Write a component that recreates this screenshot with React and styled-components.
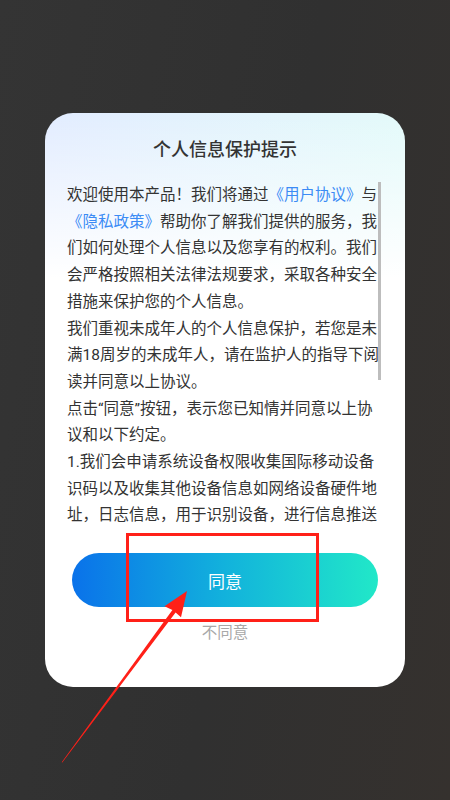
import styled, { createGlobalStyle } from "styled-components";

const GlobalStyle = createGlobalStyle`
	html, body {
		margin: 0;
		padding: 0;
	}
	body {
		font-family: Roboto, "Noto Sans CJK SC", sans-serif;
	}
`;

const Screen = styled.div`
	position: relative;
	width: 450px;
	height: 800px;
	display: flex;
	align-items: center;
	justify-content: center;
	background: linear-gradient(100deg, #343434 0%, #303030 55%, #35312e 100%);
	overflow: hidden;
`;

const Dialog = styled.div`
	width: 360px;
	height: 574px;
	box-sizing: border-box;
	border-radius: 28px;
	padding: 24px 0 0 22px;
	display: flex;
	flex-direction: column;
	background:
		linear-gradient(180deg, rgba(255, 255, 255, 0) 0px, #fff 165px),
		linear-gradient(90deg, #e2ecff 0%, #e3fafa 100%);
`;

const Title = styled.h2`
	margin: 0 22px 19px 0;
	font-size: 18px;
	font-weight: 500;
	line-height: 26px;
	text-align: center;
	color: #333;
`;

const ScrollArea = styled.div`
	position: relative;
	width: 314px;
	height: 348px;
`;

const Scroller = styled.div`
	width: 313px;
	height: 100%;
	overflow-y: auto;
	scrollbar-width: none;

	&::-webkit-scrollbar {
		display: none;
	}
`;

const ScrollThumb = styled.div`
	position: absolute;
	right: 0;
	top: 0;
	width: 3px;
	height: 198px;
	background: #bdbdbd;
`;

const Para = styled.p`
	margin: 0;
	font-size: 15.5px;
	line-height: 26.7px;
	color: #333;
`;

const Link = styled.span`
	color: #3b8bf5;
`;

const AgreeButton = styled.button`
	align-self: flex-start;
	margin: 23px 0 0 5px;
	width: 306px;
	height: 54px;
	border: none;
	border-radius: 27px;
	background: linear-gradient(90deg, #0a72ea 0%, #12b2dc 50%, #21e8c8 100%);
	color: #fff;
	font-family: Roboto, "Noto Sans CJK SC", sans-serif;
	font-size: 17px;
	cursor: pointer;
`;

const Refuse = styled.div`
	margin: 15px 22px 0 0;
	font-size: 15.5px;
	line-height: 22px;
	text-align: center;
	color: #a8a8a8;
`;

const Highlight = styled.div`
	position: absolute;
	left: 126px;
	top: 533px;
	width: 193px;
	height: 89px;
	box-sizing: border-box;
	border: 3px solid #ff2018;
	pointer-events: none;
`;

const ArrowLayer = styled.svg`
	position: absolute;
	left: 0;
	top: 0;
	pointer-events: none;
`;

export default function App() {
	return (
		<>
			<GlobalStyle />
			<Screen>
				<Dialog>
					<Title>个人信息保护提示</Title>
					<ScrollArea>
						<Scroller>
							<Para>
								欢迎使用本产品！我们将通过<Link>《用户协议》</Link>与
								<Link>《隐私政策》</Link>
								帮助你了解我们提供的服务，我们如何处理个人信息以及您享有的权利。我们会严格按照相关法律法规要求，采取各种安全措施来保护您的个人信息。
							</Para>
							<Para>
								我们重视未成年人的个人信息保护，若您是未满18周岁的未成年人，请在监护人的指导下阅读并同意以上协议。
							</Para>
							<Para>点击“同意”按钮，表示您已知情并同意以上协议和以下约定。</Para>
							<Para>
								1.我们会申请系统设备权限收集国际移动设备识码以及收集其他设备信息如网络设备硬件地址，日志信息，用于识别设备，进行信息推送和安全风控，保障您的账号安全。
							</Para>
							<Para>
								2.我们可能会申请位置权限，用于为您推荐附近的内容和服务，您可以拒绝授权，拒绝后不影响其他功能的使用。
							</Para>
							<Para>
								3.我们会采取业界领先的安全措施保护您的个人信息，未经您的同意，我们不会向第三方提供您的信息。
							</Para>
						</Scroller>
						<ScrollThumb />
					</ScrollArea>
					<AgreeButton>同意</AgreeButton>
					<Refuse>不同意</Refuse>
				</Dialog>
				<Highlight />
				<ArrowLayer width="450" height="800" viewBox="0 0 450 800">
					<polygon
						points="61.7,762.3 172.4,610.1 164.5,606.3 187,591 181,617.2 175.6,612.4 62.3,762.6"
						fill="#ff2018"
					/>
				</ArrowLayer>
			</Screen>
		</>
	);
}
